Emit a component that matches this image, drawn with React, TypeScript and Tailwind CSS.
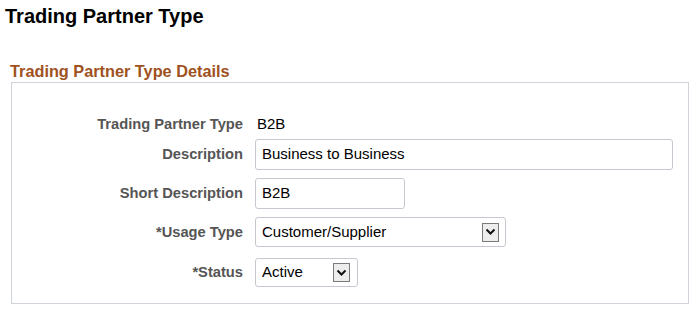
import React from "react";

const Chevron = () => (
  <span className="flex h-[19px] w-[17px] items-center justify-center border border-[#7a7a7a] bg-[#ededed]">
    <svg width="11" height="8" viewBox="0 0 11 8">
      <path d="M1.5 1.5 L5.5 5.5 L9.5 1.5" fill="none" stroke="#111" strokeWidth="2" />
    </svg>
  </span>
);

export default function App() {
  const label = "text-right text-[14.7px] font-bold text-[#555555] leading-none";
  return (
    <div className="h-[310px] w-[699px] bg-white" style={{ fontFamily: '"Liberation Sans", Arial, sans-serif' }}>
      <div className="pl-[5px] pt-[5px] text-[20px] font-bold leading-[22px] text-black">Trading Partner Type</div>
      <div className="mt-[35px] pl-[10px] text-[16.3px] font-bold leading-[18px] text-[#a0521e]">Trading Partner Type Details</div>
      <div className="ml-[11px] mt-[2px] h-[222px] w-[678px] border border-[#cfd4da]">
        <div className="grid grid-cols-[231px_1fr] items-center gap-x-[12px] pt-[31px]">
          <div className={label}>Trading Partner Type</div>
          <div className="h-[20px] pl-[2px] text-[15px] leading-[20px] text-black">B2B</div>

          <div className={`${label} mt-[5px]`}>Description</div>
          <div className="mt-[5px] flex h-[31px] w-[418px] items-center rounded-[3px] border border-[#c4c9cf] px-[6px] text-[15px] text-black">Business to Business</div>

          <div className={`${label} mt-[8px]`}>Short Description</div>
          <div className="mt-[8px] flex h-[31px] w-[150px] items-center rounded-[3px] border border-[#c4c9cf] px-[6px] text-[15px] text-black">B2B</div>

          <div className={`${label} mt-[8px]`}>*Usage Type</div>
          <div className="mt-[8px] flex h-[30px] w-[251px] items-center justify-between rounded-[3px] border border-[#c4c9cf] pl-[6px] pr-[6px] text-[15px] text-black">
            <span>Customer/Supplier</span>
            <Chevron />
          </div>

          <div className={`${label} mt-[11px]`}>*Status</div>
          <div className="mt-[11px] flex h-[29px] w-[103px] items-center justify-between rounded-[3px] border border-[#c4c9cf] pl-[6px] pr-[7px] text-[15px] text-black">
            <span>Active</span>
            <Chevron />
          </div>
        </div>
      </div>
    </div>
  );
}
